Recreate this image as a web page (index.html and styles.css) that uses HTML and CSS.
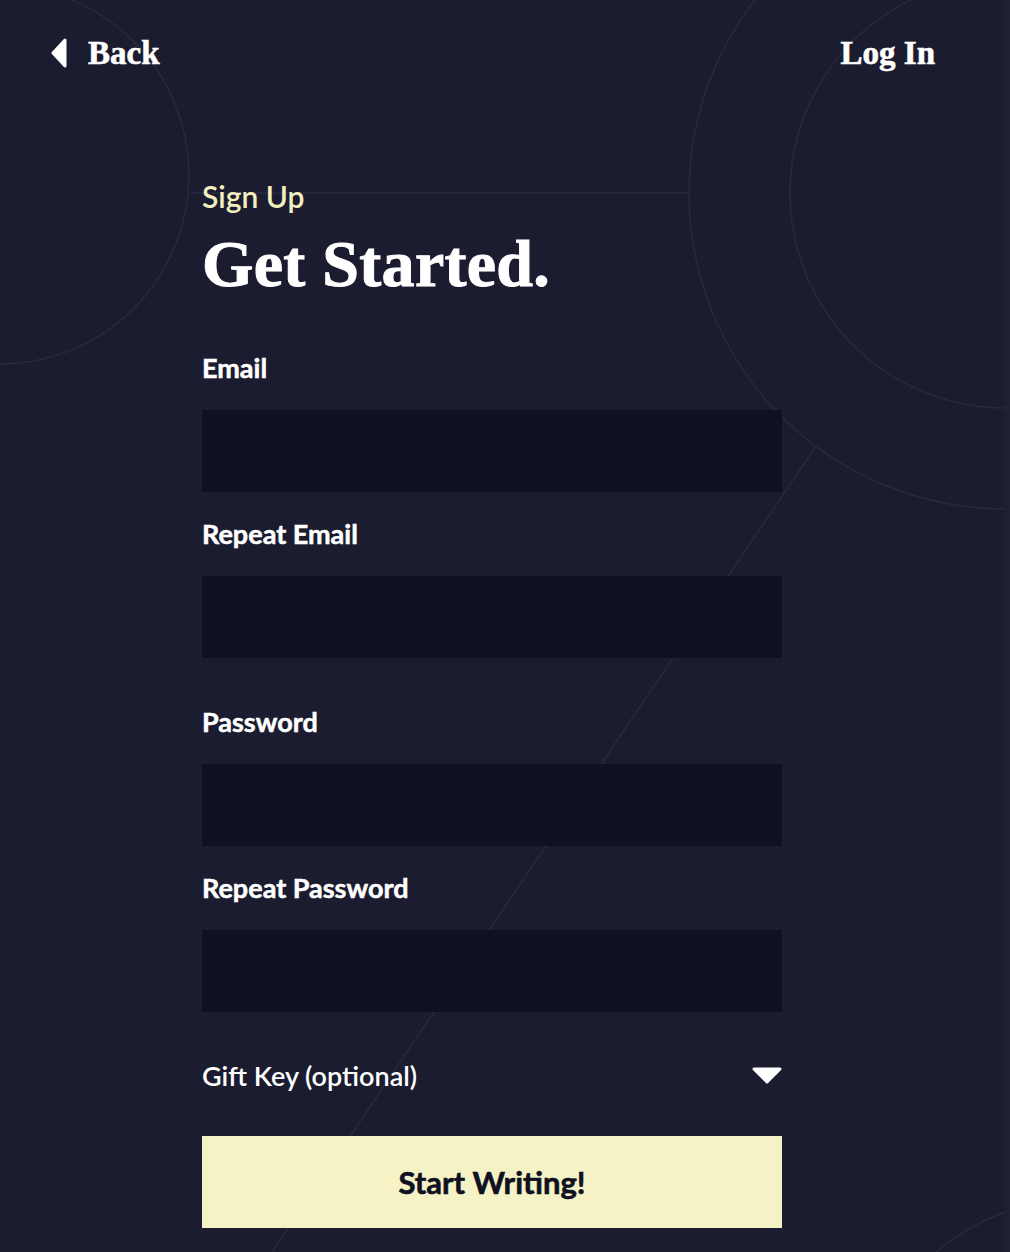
FILE: index.html
```html
<!DOCTYPE html>
<html lang="en">
<head>
  <meta charset="UTF-8" />
  <meta name="viewport" content="width=device-width, initial-scale=1" />
  <title>Sign Up</title>
  <link rel="stylesheet" href="styles.css">
</head>
<body>

  <svg class="backdrop" width="1010" height="1252" viewBox="0 0 1010 1252" aria-hidden="true">
    <circle cx="0" cy="175" r="189" />
    <circle cx="1005" cy="193" r="316" />
    <circle cx="1005" cy="193" r="215" />
    <circle cx="1080" cy="1420" r="221" />
    <line x1="190" y1="193" x2="689" y2="193" />
    <line x1="816" y1="446" x2="272" y2="1252" />
  </svg>

  <header class="topbar">
    <a href="#" class="navLink">
      <svg class="backArrow" width="18" height="30" viewBox="0 0 18 30">
        <path d="M15 2 L15 28 L3 15 Z" />
      </svg>
      Back
    </a>
    <a href="#" class="navLink">Log In</a>
  </header>

  <main class="signup">
    <p class="eyebrow">Sign Up</p>
    <h1>Get Started.</h1>

    <form id="signupForm">
      <div class="group">
        <label for="email">Email</label>
        <input type="email" id="email" name="email" />

        <label for="email2">Repeat Email</label>
        <input type="email" id="email2" name="email2" />
      </div>

      <div class="group">
        <label for="password">Password</label>
        <input type="password" id="password" name="password" />

        <label for="password2">Repeat Password</label>
        <input type="password" id="password2" name="password2" />
      </div>

      <div class="giftToggle">
        <span>Gift Key (optional)</span>
        <svg width="32" height="20" viewBox="0 0 32 20">
          <path d="M3 3 L29 3 L16 16 Z" />
        </svg>
      </div>

      <button type="submit">Start Writing!</button>
    </form>
  </main>

</body>
</html>
```

FILE: styles.css
```css
body {
  margin: 0;
  min-height: 1252px;
  background: #1b1c2f;
  color: #ffffff;
  font-family: Lato, 'Noto Sans', sans-serif;
  position: relative;
  overflow: hidden;
  border-right: 5px solid #1f2133;
  box-sizing: border-box;
}

.backdrop {
  position: absolute;
  top: 0;
  left: 0;
  z-index: 0;
}

.backdrop circle,
.backdrop line {
  fill: none;
  stroke: #272a3d;
  stroke-width: 1.5;
}

.topbar {
  position: relative;
  display: flex;
  justify-content: space-between;
  align-items: center;
  padding: 30px 70px 0 50px;
}

.navLink {
  display: flex;
  align-items: center;
  color: #ffffff;
  text-decoration: none;
  font-family: 'Liberation Serif', serif;
  font-weight: bold;
  font-size: 33px;
  line-height: 46px;
  -webkit-text-stroke: 0.6px #ffffff;
}

.backArrow {
  margin-right: 20px;
  fill: #ffffff;
  stroke: #ffffff;
  stroke-width: 3;
  stroke-linejoin: round;
}

.signup {
  position: relative;
  width: 580px;
  margin-left: 202px;
  padding-top: 102px;
}

.eyebrow {
  margin: 0;
  color: #f3efbf;
  font-size: 30px;
  font-weight: 600;
  line-height: 36px;
}

h1 {
  margin: 14px 0 0;
  font-family: 'Liberation Serif', serif;
  font-weight: bold;
  font-size: 66px;
  line-height: 72px;
  letter-spacing: 0.3px;
  -webkit-text-stroke: 1px #ffffff;
}

form {
  margin-top: 52px;
}

.group {
  margin-bottom: 48px;
}

label {
  display: block;
  font-size: 27px;
  font-weight: bold;
  line-height: 32px;
  margin-top: 26px;
  -webkit-text-stroke: 0.5px #ffffff;
}

.group label:first-child {
  margin-top: 0;
}

input {
  display: block;
  width: 100%;
  height: 82px;
  margin-top: 26px;
  box-sizing: border-box;
  border: none;
  background: #0f1021;
  color: #ffffff;
  padding: 0 20px;
  font-size: 22px;
  font-family: inherit;
}

.giftToggle {
  display: flex;
  justify-content: space-between;
  align-items: center;
  margin-top: -2px;
  font-size: 27px;
  font-weight: 600;
  line-height: 36px;
}

.giftToggle svg {
  fill: #ffffff;
  stroke: #ffffff;
  stroke-width: 3;
  stroke-linejoin: round;
  margin-right: -1px;
}

button {
  display: block;
  width: 100%;
  height: 92px;
  margin-top: 42px;
  border: none;
  background: #f5f2c6;
  color: #0f1021;
  font-family: inherit;
  font-size: 31px;
  font-weight: bold;
  -webkit-text-stroke: 0.6px #0f1021;
  cursor: pointer;
}
```
